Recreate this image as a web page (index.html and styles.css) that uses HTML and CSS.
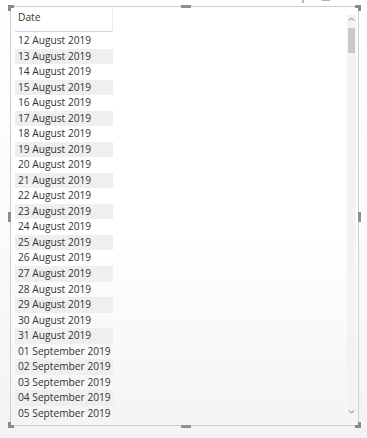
FILE: index.html
```html
<!DOCTYPE html>
<html>
<head>
<meta charset="utf-8">
<link rel="stylesheet" href="styles.css">
</head>
<body>
<div class="topicons">
  <span class="pin"></span>
  <span class="focus"></span>
</div>
<div class="frame">
  <div class="table">
    <div class="head">Date</div>
    <div class="row">12 August 2019</div>
    <div class="row alt">13 August 2019</div>
    <div class="row">14 August 2019</div>
    <div class="row alt">15 August 2019</div>
    <div class="row">16 August 2019</div>
    <div class="row alt">17 August 2019</div>
    <div class="row">18 August 2019</div>
    <div class="row alt">19 August 2019</div>
    <div class="row">20 August 2019</div>
    <div class="row alt">21 August 2019</div>
    <div class="row">22 August 2019</div>
    <div class="row alt">23 August 2019</div>
    <div class="row">24 August 2019</div>
    <div class="row alt">25 August 2019</div>
    <div class="row">26 August 2019</div>
    <div class="row alt">27 August 2019</div>
    <div class="row">28 August 2019</div>
    <div class="row alt">29 August 2019</div>
    <div class="row">30 August 2019</div>
    <div class="row alt">31 August 2019</div>
    <div class="row">01 September 2019</div>
    <div class="row alt">02 September 2019</div>
    <div class="row">03 September 2019</div>
    <div class="row alt">04 September 2019</div>
    <div class="row">05 September 2019</div>
  </div>
  <div class="scroll">
    <svg class="arrow" width="9" height="8" viewBox="0 0 9 8"><path d="M2 5.5 L4.5 3 L7 5.5" fill="none" stroke="#777" stroke-width="1"/></svg>
    <div class="track"><div class="thumb"></div></div>
    <svg class="arrow" width="9" height="8" viewBox="0 0 9 8"><path d="M2 2.5 L4.5 5 L7 2.5" fill="none" stroke="#777" stroke-width="1"/></svg>
  </div>
  <span class="h tl"></span>
  <span class="h tr"></span>
  <span class="h bl"></span>
  <span class="h br"></span>
  <span class="m top"></span>
  <span class="m bottom"></span>
  <span class="m left"></span>
  <span class="m right"></span>
</div>
</body>
</html>
```
FILE: styles.css
```css
html, body {
  margin: 0;
  padding: 0;
}
body {
  width: 367px;
  height: 438px;
  background: linear-gradient(#ffffff 0%, #fbfbfb 50%, #f3f3f3 100%);
  font-family: "Open Sans", "Noto Sans", sans-serif;
  color: #333;
  position: relative;
  overflow: hidden;
}
.topicons {
  position: absolute;
  top: 0;
  left: 300px;
  height: 4px;
}
.pin {
  position: absolute;
  left: 2px;
  top: 0;
  width: 2px;
  height: 3px;
  background: #b5b5b5;
}
.focus {
  position: absolute;
  left: 22px;
  top: -2px;
  width: 8px;
  height: 3px;
  border: 1px solid #b0b0b0;
  box-sizing: border-box;
}
.frame {
  position: relative;
  margin: 6px 0 0 10px;
  width: 349px;
  height: 420px;
  box-sizing: border-box;
  border: 1px solid #cfcfcf;
  background: linear-gradient(#ffffff 0%, #ffffff 55%, #f4f4f4 100%);
  display: flex;
}
.table {
  margin-left: 4px;
  width: 98px;
  display: flex;
  flex-direction: column;
}
.head {
  height: 24px;
  line-height: 21px;
  padding-left: 3px;
  font-size: 10.2px;
  border-bottom: 1px solid #c9d6e4;
  border-right: 1px solid #e6ecf2;
  color: #333;
}
.row {
  height: 15.54px;
  line-height: 15.5px;
  padding-left: 3px;
  font-size: 10.2px;
  white-space: nowrap;
  color: #333;
}
.head + .row {
  margin-top: 1px;
}
.alt {
  background: #efefef;
}
.scroll {
  margin-left: auto;
  margin-right: 2px;
  margin-top: 8px;
  width: 9px;
  height: 401px;
  background: #f3f3f3;
  display: flex;
  flex-direction: column;
  align-items: center;
}
.arrow {
  display: block;
  flex: none;
}
.track {
  flex: 1;
  width: 9px;
  padding-top: 5px;
}
.thumb {
  width: 7px;
  margin-left: 1px;
  height: 25px;
  background: #c9c9c9;
}
.h {
  position: absolute;
  width: 6px;
  height: 6px;
  box-sizing: border-box;
  border-color: #8a8a8a;
  border-style: solid;
  border-width: 0;
}
.tl { left: -3px; top: -2px; border-left-width: 3px; border-top-width: 3px; }
.tr { right: -3px; top: -2px; border-right-width: 3px; border-top-width: 3px; }
.bl { left: -3px; bottom: -3px; border-left-width: 3px; border-bottom-width: 3px; }
.br { right: -3px; bottom: -3px; border-right-width: 3px; border-bottom-width: 3px; }
.m {
  position: absolute;
  background: #8f8f8f;
}
.top { left: 170px; top: -2px; width: 10px; height: 3px; }
.bottom { left: 170px; bottom: -3px; width: 10px; height: 3px; }
.left { left: -3px; top: 205px; width: 3px; height: 10px; }
.right { right: -3px; top: 205px; width: 3px; height: 10px; }
```
